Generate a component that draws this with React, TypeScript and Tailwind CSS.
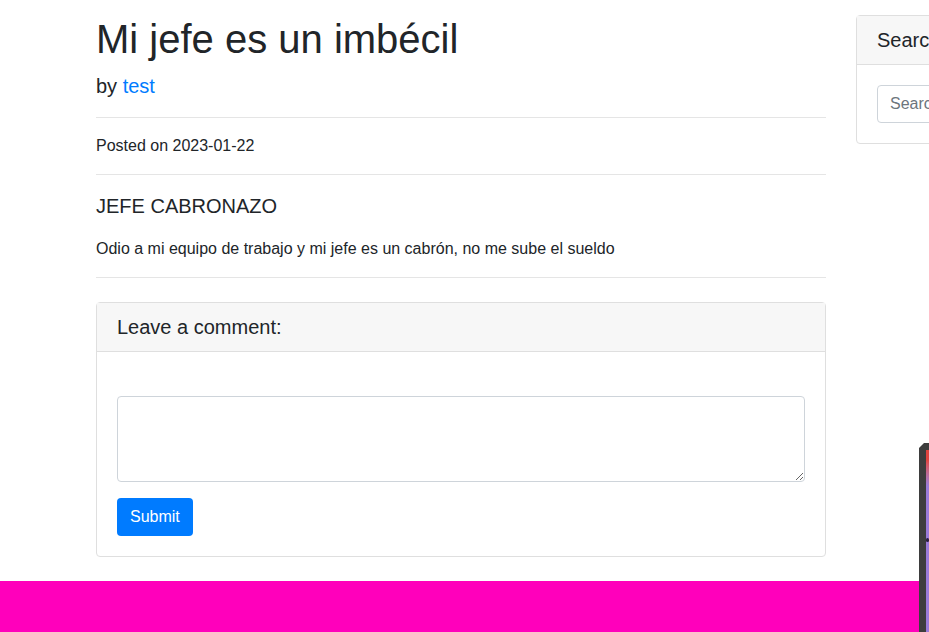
const App = () => {
  return (
    <div className="relative h-[632px] w-[929px] overflow-hidden bg-white font-['Liberation_Sans',Arial,sans-serif] text-[#212529]">
      <div className="flex w-[1300px] pl-[96px]">
        {/* post column */}
        <div className="w-[730px] shrink-0 pt-[15px]">
          <h1 className="text-[40px] leading-[48px] font-normal">Mi jefe es un imbécil</h1>
          <p className="mt-2 text-[20px] leading-[30px]">
            by <a className="text-[#007bff]">test</a>
          </p>
          <hr className="mt-4 border-t border-[#e5e5e5]" />
          <p className="mt-4 text-[16px] leading-6">Posted on 2023-01-22</p>
          <hr className="mt-4 border-t border-[#e5e5e5]" />
          <p className="mt-4 text-[20px] leading-[30px]">JEFE CABRONAZO</p>
          <p className="mt-4 text-[16px] leading-6">
            Odio a mi equipo de trabajo y mi jefe es un cabrón, no me sube el sueldo
          </p>
          <hr className="mt-4 border-t border-[#e5e5e5]" />

          <div className="mt-6 rounded border border-[#dfdfdf]">
            <div className="border-b border-[#dfdfdf] bg-[#f7f7f7] px-5 py-3">
              <h5 className="text-[20px] leading-6">Leave a comment:</h5>
            </div>
            <div className="p-5">
              <form className="pt-6">
                <textarea
                  rows={3}
                  className="block h-[86px] w-full rounded border border-[#ced4da] px-3 py-1.5 text-base"
                />
                <button
                  type="button"
                  className="mt-4 h-[38px] rounded bg-[#007bff] px-[13px] text-[16px] text-white"
                >
                  Submit
                </button>
              </form>
            </div>
          </div>
        </div>

        {/* sidebar */}
        <div className="ml-[30px] w-[350px] shrink-0 pt-[15px]">
          <div className="rounded border border-[#dfdfdf]">
            <div className="border-b border-[#dfdfdf] bg-[#f7f7f7] px-5 py-3">
              <h5 className="text-[20px] leading-6">Search</h5>
            </div>
            <div className="p-5">
              <input
                placeholder="Search for..."
                className="block h-[38px] w-full rounded border border-[#ced4da] px-3 text-base placeholder:text-[#6c757d]"
              />
            </div>
          </div>
        </div>
      </div>

      <footer className="mt-6 h-[60px] bg-[#ff00bb]" />

      {/* device mockup peeking in at the right edge */}
      <div className="absolute left-[919px] top-[443px] h-[200px] w-[40px] bg-[#3d3d3d] [clip-path:polygon(5px_0,100%_0,100%_100%,0_100%,0_5px)]">
        <div className="ml-[7px] mt-[7px] h-full bg-gradient-to-b from-[#e0443f] from-[5%] via-[#9a7bd8] via-[18%] to-[#9a7bd8]">
          <div className="h-[88px]" />
          <div className="h-[4px] w-[3px] rounded-full bg-[#2a2040]" />
        </div>
      </div>
    </div>
  );
};

export default App;
